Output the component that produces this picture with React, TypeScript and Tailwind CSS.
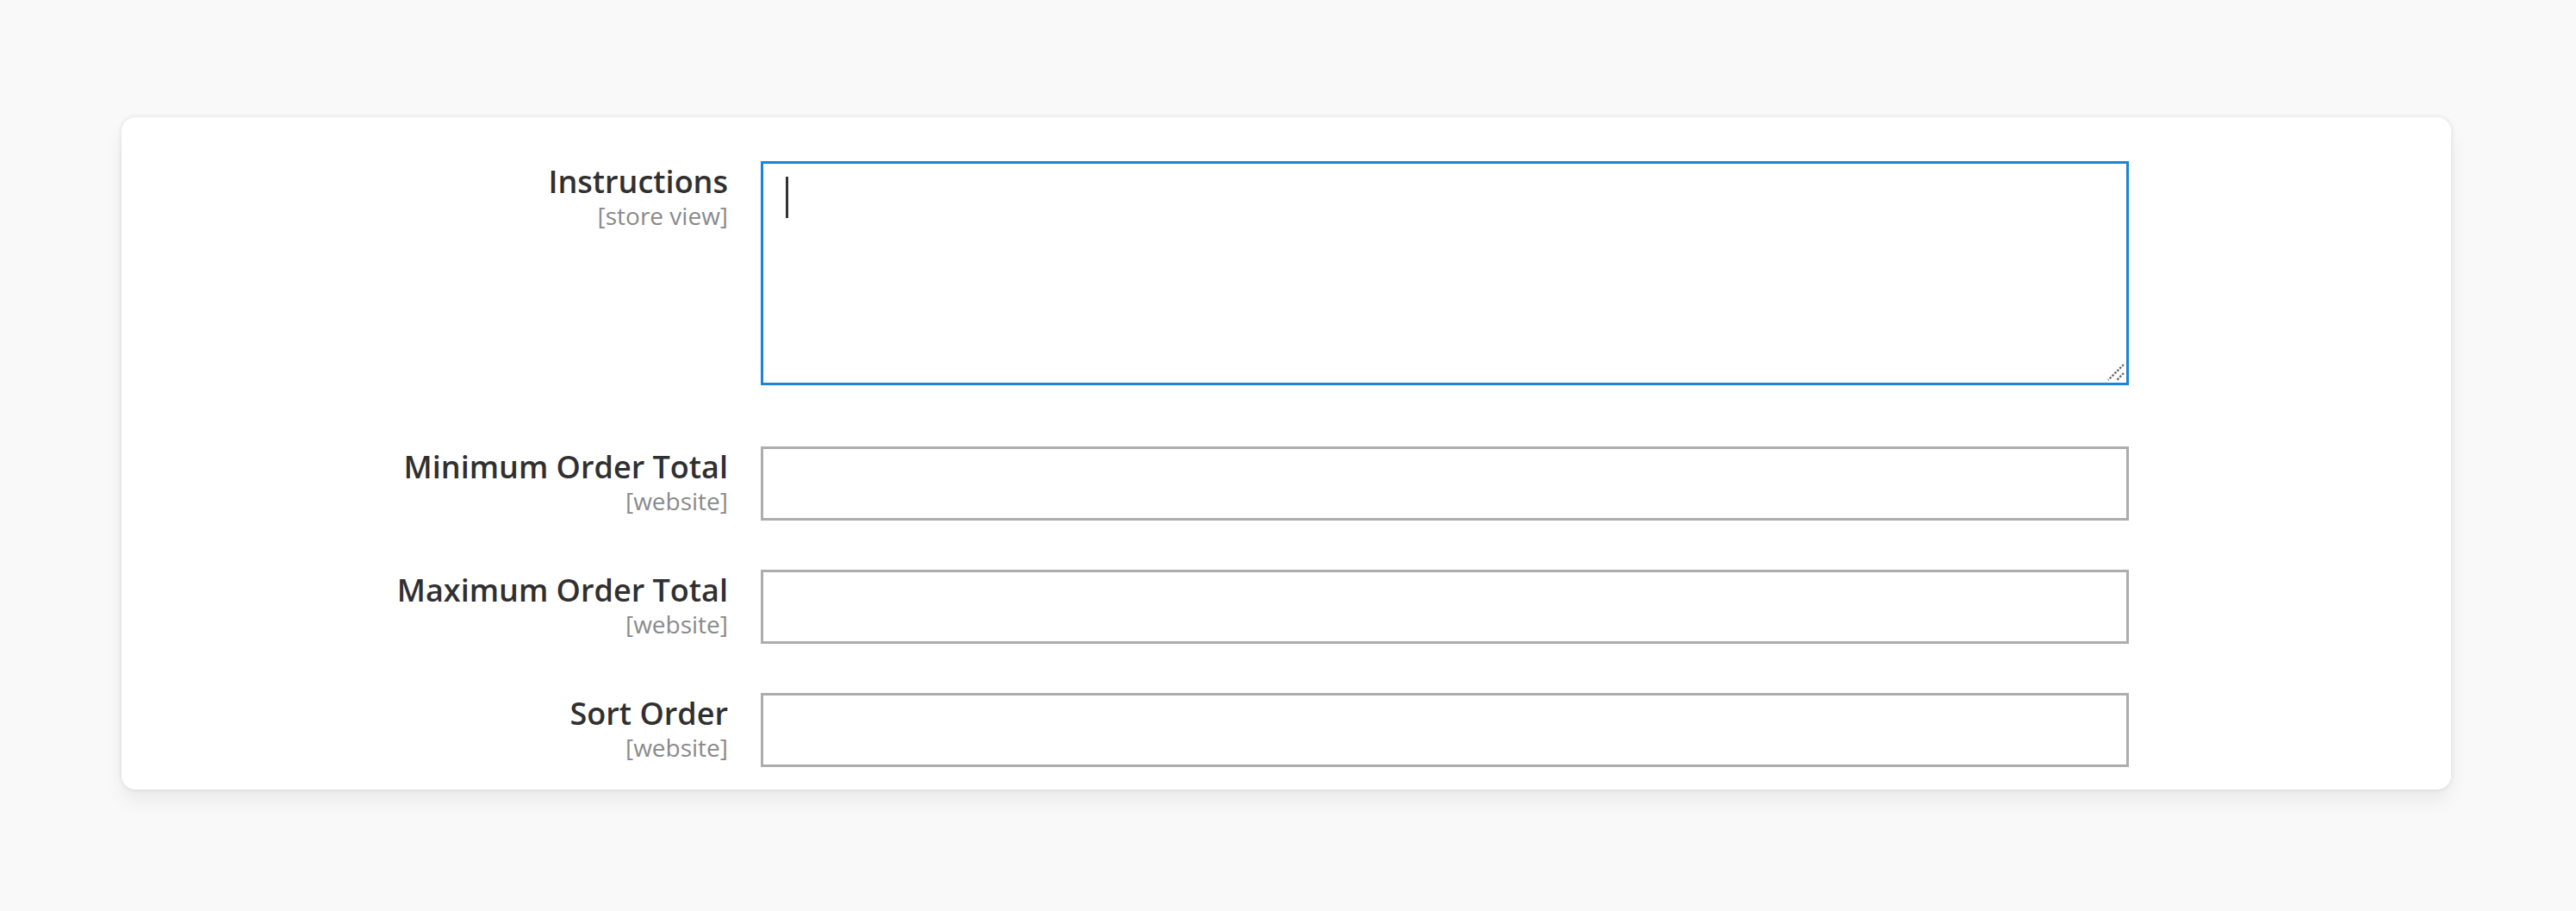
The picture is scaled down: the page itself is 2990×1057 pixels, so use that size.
import React from "react";

type Field = {
  label: string;
  scope: string;
  multiline?: boolean;
};

const fields: Field[] = [
  { label: "Instructions", scope: "[store view]", multiline: true },
  { label: "Minimum Order Total", scope: "[website]" },
  { label: "Maximum Order Total", scope: "[website]" },
  { label: "Sort Order", scope: "[website]" },
];

const FieldLabel = ({ label, scope }: { label: string; scope: string }) => (
  <div className="w-[704px] shrink-0 pt-[2px] text-right">
    <div className="text-[36px] leading-[44px] font-semibold text-[#303030]">{label}</div>
    <div className="text-[28px] leading-[34px] text-[#8a8a8a]">{scope}</div>
  </div>
);

const ResizeGrip = () => (
  <svg
    className="absolute right-[5px] bottom-[5px]"
    width="20"
    height="20"
    viewBox="0 0 20 20"
    fill="none"
  >
    <path d="M19 1L1 19" stroke="#6b6b6b" strokeWidth="2.4" strokeDasharray="2.5 1.6" />
    <path d="M19 11L11 19" stroke="#6b6b6b" strokeWidth="2.4" strokeDasharray="2.5 1.6" />
  </svg>
);

export default function App() {
  return (
    <div className="min-h-screen bg-[#f9f9f9] pt-[136px] pl-[141px] font-['Open_Sans',sans-serif]">
      <div className="w-[2704px] rounded-[16px] bg-white pt-[51px] pb-[26px] shadow-[0_0_5px_1px_rgba(0,0,0,0.08),0_14px_22px_rgba(0,0,0,0.06)]">
        <div className="flex flex-col">
          {fields.map((f, i) => (
            <div
              key={f.label}
              className={`flex items-start gap-[38px] ${i === 0 ? "mb-[71px]" : i < fields.length - 1 ? "mb-[57px]" : ""}`}
            >
              <FieldLabel label={f.label} scope={f.scope} />
              {f.multiline ? (
                <div className="relative h-[260px] w-[1588px]">
                  <textarea className="block h-full w-full resize-none border-[3px] border-[#1c84d4] bg-white outline-none" />
                  <span className="absolute left-[29px] top-[18px] h-[48px] w-[3px] bg-[#333333]" />
                  <ResizeGrip />
                </div>
              ) : (
                <input
                  type="text"
                  className="block h-[86px] w-[1588px] border-[3px] border-[#adadad] bg-white outline-none"
                />
              )}
            </div>
          ))}
        </div>
      </div>
    </div>
  );
}
